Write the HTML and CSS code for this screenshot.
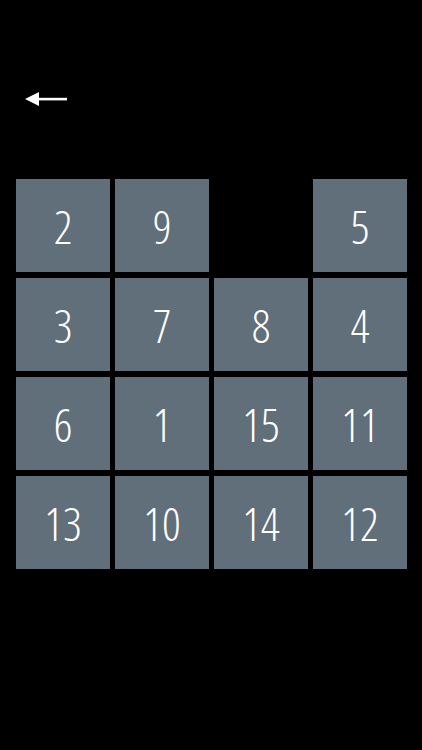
FILE: index.html
```html
<!DOCTYPE html>
<html>
<head>
<meta charset="utf-8">
<link rel="stylesheet" href="styles.css">
</head>
<body>
<div class="screen">
  <div class="header">
    <svg class="back" width="44" height="16" viewBox="0 0 44 16">
      <polygon points="1,8 15,1 15,15" fill="#fff"/>
      <rect x="12" y="6.8" width="31" height="2.6" fill="#fff"/>
    </svg>
  </div>
  <div class="board">
    <div class="tile">2</div>
    <div class="tile">9</div>
    <div class="empty"></div>
    <div class="tile">5</div>
    <div class="tile">3</div>
    <div class="tile">7</div>
    <div class="tile">8</div>
    <div class="tile">4</div>
    <div class="tile">6</div>
    <div class="tile">1</div>
    <div class="tile">15</div>
    <div class="tile">11</div>
    <div class="tile">13</div>
    <div class="tile">10</div>
    <div class="tile">14</div>
    <div class="tile">12</div>
  </div>
</div>
</body>
</html>
```
FILE: styles.css
```css
html, body {
  margin: 0;
  padding: 0;
  background: #000;
}
.screen {
  width: 422px;
  height: 750px;
  background: #000;
}
.header {
  height: 179px;
  padding-left: 24px;
  padding-top: 91px;
  box-sizing: border-box;
}
.back {
  display: block;
}
.board {
  display: grid;
  grid-template-columns: repeat(4, 94px);
  grid-template-rows: repeat(4, 93px);
  column-gap: 5px;
  row-gap: 6px;
  padding-left: 16px;
}
.tile {
  background: #606f79;
  color: #fff;
  display: flex;
  align-items: center;
  justify-content: center;
  font-family: "Open Sans", sans-serif;
  font-weight: 300;
  font-stretch: 75%;
  font-size: 46px;
}
```
